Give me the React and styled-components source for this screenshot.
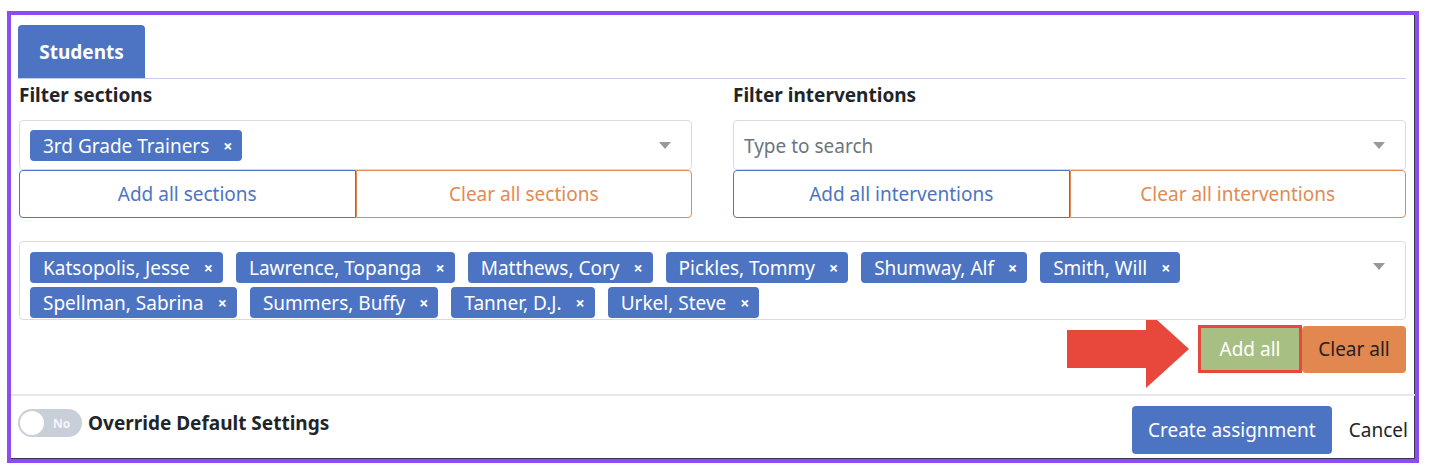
import styled, { createGlobalStyle } from 'styled-components';

const GlobalStyle = createGlobalStyle`
  body {
    margin: 0;
    background: #fff;
    font-family: "Noto Sans", "Open Sans", sans-serif;
    color: #212529;
  }
`;

const BLUE = '#4c74c2';
const ORANGE = '#e38a52';

const Frame = styled.div`
  box-sizing: border-box;
  margin: 11px 0 0 7px;
  width: 1412px;
  height: 452px;
  border: 4px solid #8b4cf2;
  box-shadow: inset -1px -1px 0 #3a3550;
  display: flex;
  flex-direction: column;
`;

const Body = styled.div`
  padding: 10px 9px 0 7px;
  flex: 1;
`;

const TabBar = styled.div`
  display: flex;
  border-bottom: 1px solid #c6cde8;
`;

const Tab = styled.div`
  width: 127px;
  height: 53px;
  background: ${BLUE};
  border-radius: 4px 4px 0 0;
  color: #fff;
  font-weight: 700;
  font-size: 19px;
  display: flex;
  align-items: center;
  justify-content: center;
`;

const Columns = styled.div`
  display: grid;
  grid-template-columns: 1fr 1fr;
  column-gap: 41px;
  margin-top: 4px;
  padding-left: 1px;
`;

const Label = styled.div`
  font-weight: 700;
  font-size: 19px;
  line-height: 24px;
  margin-bottom: 13px;
`;

const SelectBox = styled.div`
  box-sizing: border-box;
  position: relative;
  display: flex;
  flex-wrap: wrap;
  align-items: center;
  align-content: ${(p) => (p.$top ? 'flex-start' : 'center')};
  gap: ${(p) => p.$rowGap || 0}px 13px;
  min-height: ${(p) => p.$height}px;
  padding: ${(p) => p.$pad || '1px 40px 0 10px'};
  border: 1px solid #d9dbe0;
  border-radius: 4px;
  background: #fff;
`;

const Caret = styled.span`
  position: absolute;
  right: 20px;
  top: ${(p) => p.$top || '50%'};
  margin-top: -3px;
  width: 0;
  height: 0;
  border-left: 6px solid transparent;
  border-right: 6px solid transparent;
  border-top: 7px solid #999;
`;

const Placeholder = styled.span`
  color: #6c757d;
  font-size: 19px;
`;

const Chip = styled.span`
  display: inline-flex;
  align-items: center;
  height: 31px;
  padding: 0 10px 0 13px;
  background: ${BLUE};
  border-radius: 4px;
  color: #fff;
  font-size: 19px;
  white-space: nowrap;
`;

const ChipX = styled.span`
  margin-left: 14px;
  font-size: 16px;
  font-weight: 700;
`;

const ButtonPair = styled.div`
  display: grid;
  grid-template-columns: 1fr 1fr;
  height: 48px;
`;

const OutlineButton = styled.button`
  font-family: inherit;
  font-size: 19px;
  background: #fff;
  color: ${(p) => p.$color};
  border: 1px solid ${(p) => p.$color};
  border-radius: ${(p) => (p.$side === 'left' ? '4px 0 0 4px' : '0 4px 4px 0')};
  cursor: pointer;
`;

const StudentArea = styled.div`
  margin-top: 23px;
  padding-left: 1px;
`;

const ActionRow = styled.div`
  display: flex;
  justify-content: flex-end;
  align-items: center;
  margin-top: 5px;
  height: 48px;
`;

const Arrow = styled.svg`
  width: 122px;
  height: 78px;
  margin-right: 9px;
  flex-shrink: 0;
`;

const SolidButton = styled.button`
  box-sizing: border-box;
  font-family: inherit;
  font-size: 19px;
  height: ${(p) => p.$h || 48}px;
  width: ${(p) => p.$w}px;
  background: ${(p) => p.$bg};
  color: ${(p) => p.$fg};
  border: ${(p) => (p.$outline ? `3px solid ${p.$outline}` : 'none')};
  border-radius: ${(p) => (p.$outline ? 0 : 4)}px;
  cursor: pointer;
`;

const Footer = styled.div`
  display: flex;
  justify-content: space-between;
  align-items: flex-start;
  border-top: 2px solid #e7e7ec;
  padding: 10px 7px 0 7px;
  height: 65px;
  box-sizing: border-box;
`;

const ToggleGroup = styled.div`
  display: flex;
  align-items: center;
  gap: 6px;
  margin-top: 3px;
`;

const Toggle = styled.div`
  box-sizing: border-box;
  width: 64px;
  height: 28px;
  border-radius: 14px;
  background: #c9cfd9;
  display: flex;
  align-items: center;
  padding: 0 2px;
`;

const Knob = styled.span`
  width: 24px;
  height: 24px;
  border-radius: 50%;
  background: #fff;
`;

const ToggleText = styled.span`
  margin-left: 9px;
  font-size: 12px;
  font-weight: 700;
  color: #f4f5f8;
`;

const ToggleLabel = styled.span`
  font-weight: 700;
  font-size: 19px;
`;

const FooterActions = styled.div`
  display: flex;
  align-items: center;
  gap: 17px;
`;

const LinkButton = styled.span`
  font-size: 19px;
  color: #212529;
`;

const students = [
  'Katsopolis, Jesse',
  'Lawrence, Topanga',
  'Matthews, Cory',
  'Pickles, Tommy',
  'Shumway, Alf',
  'Smith, Will',
  'Spellman, Sabrina',
  'Summers, Buffy',
  'Tanner, D.J.',
  'Urkel, Steve',
];

export default function App() {
  return (
    <>
      <GlobalStyle />
      <Frame>
        <Body>
          <TabBar>
            <Tab>Students</Tab>
          </TabBar>
          <Columns>
            <div>
              <Label>Filter sections</Label>
              <SelectBox $height={50}>
                <Chip>
                  3rd Grade Trainers<ChipX>×</ChipX>
                </Chip>
                <Caret />
              </SelectBox>
              <ButtonPair>
                <OutlineButton $color={BLUE} $side="left">Add all sections</OutlineButton>
                <OutlineButton $color={ORANGE}>Clear all sections</OutlineButton>
              </ButtonPair>
            </div>
            <div>
              <Label>Filter interventions</Label>
              <SelectBox $height={50}>
                <Placeholder>Type to search</Placeholder>
                <Caret />
              </SelectBox>
              <ButtonPair>
                <OutlineButton $color={BLUE} $side="left">Add all interventions</OutlineButton>
                <OutlineButton $color={ORANGE}>Clear all interventions</OutlineButton>
              </ButtonPair>
            </div>
          </Columns>
          <StudentArea>
            <SelectBox $height={79} $rowGap={4} $top $pad="10px 180px 0 10px">
              {students.map((s) => (
                <Chip key={s}>
                  {s}
                  <ChipX>×</ChipX>
                </Chip>
              ))}
              <Caret $top="24px" />
            </SelectBox>
            <ActionRow>
              <Arrow viewBox="0 0 122 78">
                <polygon points="0,20 79,20 79,0 122,39 79,78 79,58 0,58" fill="#e8473b" />
              </Arrow>
              <SolidButton $w={104} $bg="#a8bf84" $fg="#fff" $outline="#e8473b">
                Add all
              </SolidButton>
              <SolidButton $w={104} $h={47} $bg="#e2874f" $fg="#222">
                Clear all
              </SolidButton>
            </ActionRow>
          </StudentArea>
        </Body>
        <Footer>
          <ToggleGroup>
            <Toggle>
              <Knob />
              <ToggleText>No</ToggleText>
            </Toggle>
            <ToggleLabel>Override Default Settings</ToggleLabel>
          </ToggleGroup>
          <FooterActions>
            <SolidButton $w={200} $bg={BLUE} $fg="#fff">
              Create assignment
            </SolidButton>
            <LinkButton>Cancel</LinkButton>
          </FooterActions>
        </Footer>
      </Frame>
    </>
  );
}
